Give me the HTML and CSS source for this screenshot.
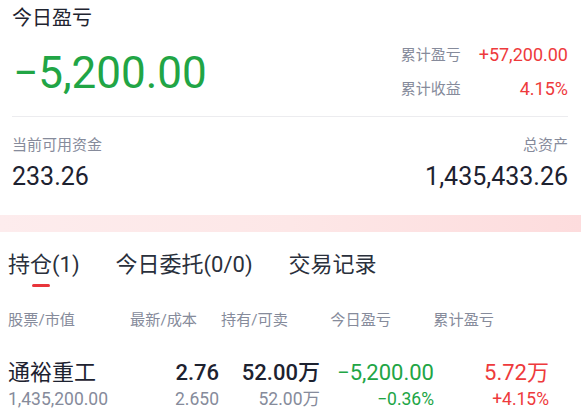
FILE: index.html
```html
<!DOCTYPE html>
<html lang="zh-CN">
<head>
<meta charset="utf-8">
<title>持仓</title>
<link rel="stylesheet" href="styles.css">
</head>
<body>
<section class="summary">
  <div class="title">今日盈亏</div>
  <div class="top">
    <div class="today green">−5,200.00</div>
    <div class="stats">
      <span class="stat-k">累计盈亏</span><span class="stat-v red">+57,200.00</span>
      <span class="stat-k">累计收益</span><span class="stat-v red">4.15%</span>
    </div>
  </div>
  <div class="divider"></div>
  <div class="assets">
    <div class="asset">
      <div class="asset-k">当前可用资金</div>
      <div class="asset-v">233.26</div>
    </div>
    <div class="asset asset-right">
      <div class="asset-k">总资产</div>
      <div class="asset-v">1,435,433.26</div>
    </div>
  </div>
</section>
<div class="band"></div>
<nav class="tabs">
  <div class="tab active"><span class="tab-text">持仓(1)</span><span class="tab-bar"></span></div>
  <div class="tab"><span class="tab-text">今日委托(0/0)</span></div>
  <div class="tab"><span class="tab-text">交易记录</span></div>
</nav>
<div class="thead">
  <span class="th th-left">股票/市值</span>
  <span class="th">最新/成本</span>
  <span class="th">持有/可卖</span>
  <span class="th">今日盈亏</span>
  <span class="th">累计盈亏</span>
</div>
<div class="row">
  <span class="name">通裕重工</span>
  <span class="big strong">2.76</span>
  <span class="big strong">52.00万</span>
  <span class="big green">−5,200.00</span>
  <span class="big red">5.72万</span>
  <span class="small left">1,435,200.00</span>
  <span class="small">2.650</span>
  <span class="small">52.00万</span>
  <span class="small green">−0.36%</span>
  <span class="small red">+4.15%</span>
</div>
</body>
</html>
```

FILE: styles.css
```css
* { box-sizing: border-box; }
html, body { margin: 0; padding: 0; background: #ffffff; }
body {
  width: 581px;
  height: 420px;
  overflow: hidden;
  font-family: "Roboto", "Noto Sans CJK SC", sans-serif;
  color: #1d2230;
}

.green { color: #21a545; }
.red { color: #ee3a3c; }

.summary { padding: 8px 13px 26px 12px; }
.title { font-size: 20px; line-height: 20px; color: #1f2430; }

.top {
  display: flex;
  justify-content: space-between;
  align-items: flex-start;
}
.today {
  margin-top: 23.3px;
  margin-left: 1px;
  font-size: 44px;
  line-height: 44px;
}
.stats {
  padding-top: 16px;
  display: grid;
  grid-template-columns: auto auto;
  column-gap: 18px;
  row-gap: 12px;
  align-items: center;
}
.stat-k { font-size: 15px; line-height: 22px; color: #868b9b; }
.stat-v { font-size: 18px; line-height: 22px; text-align: right; }

.divider { margin-top: 16.3px; height: 1px; background: #ececef; }

.assets {
  padding-top: 18px;
  display: flex;
  justify-content: space-between;
}
.asset-right { text-align: right; }
.asset-k { font-size: 15px; line-height: 20px; color: #868b9b; }
.asset-v { margin-top: 9px; font-size: 25px; line-height: 25px; color: #1d2230; }

.band {
  height: 17px;
  background: linear-gradient(90deg, #fdeced 0%, #fde7e7 50%, #fddcdd 100%);
}

.tabs {
  padding: 21.5px 0 0 8px;
  display: flex;
  gap: 36px;
  align-items: flex-start;
}
.tab { display: flex; flex-direction: column; align-items: center; }
.tab-text { font-size: 22px; line-height: 22px; color: #2a303c; }
.tab-bar {
  margin-top: 8.5px;
  margin-right: 5px;
  width: 18px;
  height: 3px;
  border-radius: 2px;
  background: #e8353b;
}

.thead {
  margin-top: 22.4px;
  padding-left: 8px;
  display: grid;
  grid-template-columns: 122px 67px 91px 103px 103px;
}
.th { font-size: 15.2px; line-height: 20px; color: #868b9b; text-align: right; white-space: nowrap; }
.th-left { text-align: left; }

.row {
  margin-top: 30px;
  padding-left: 8px;
  display: grid;
  grid-template-columns: 132px 79px 101px 114px 115px;
  row-gap: 2.5px;
}
.row > span { text-align: right; white-space: nowrap; }
.row > .name, .row > .left { text-align: left; }
.name { font-size: 22px; line-height: 26px; color: #1d2230; }
.big { font-size: 22px; line-height: 26px; }
.strong { font-weight: 500; color: #1d2230; }
.small { font-size: 17.5px; line-height: 22px; color: #868b9b; }
.small.green { color: #21a545; }
.small.red { color: #ee3a3c; }
```
